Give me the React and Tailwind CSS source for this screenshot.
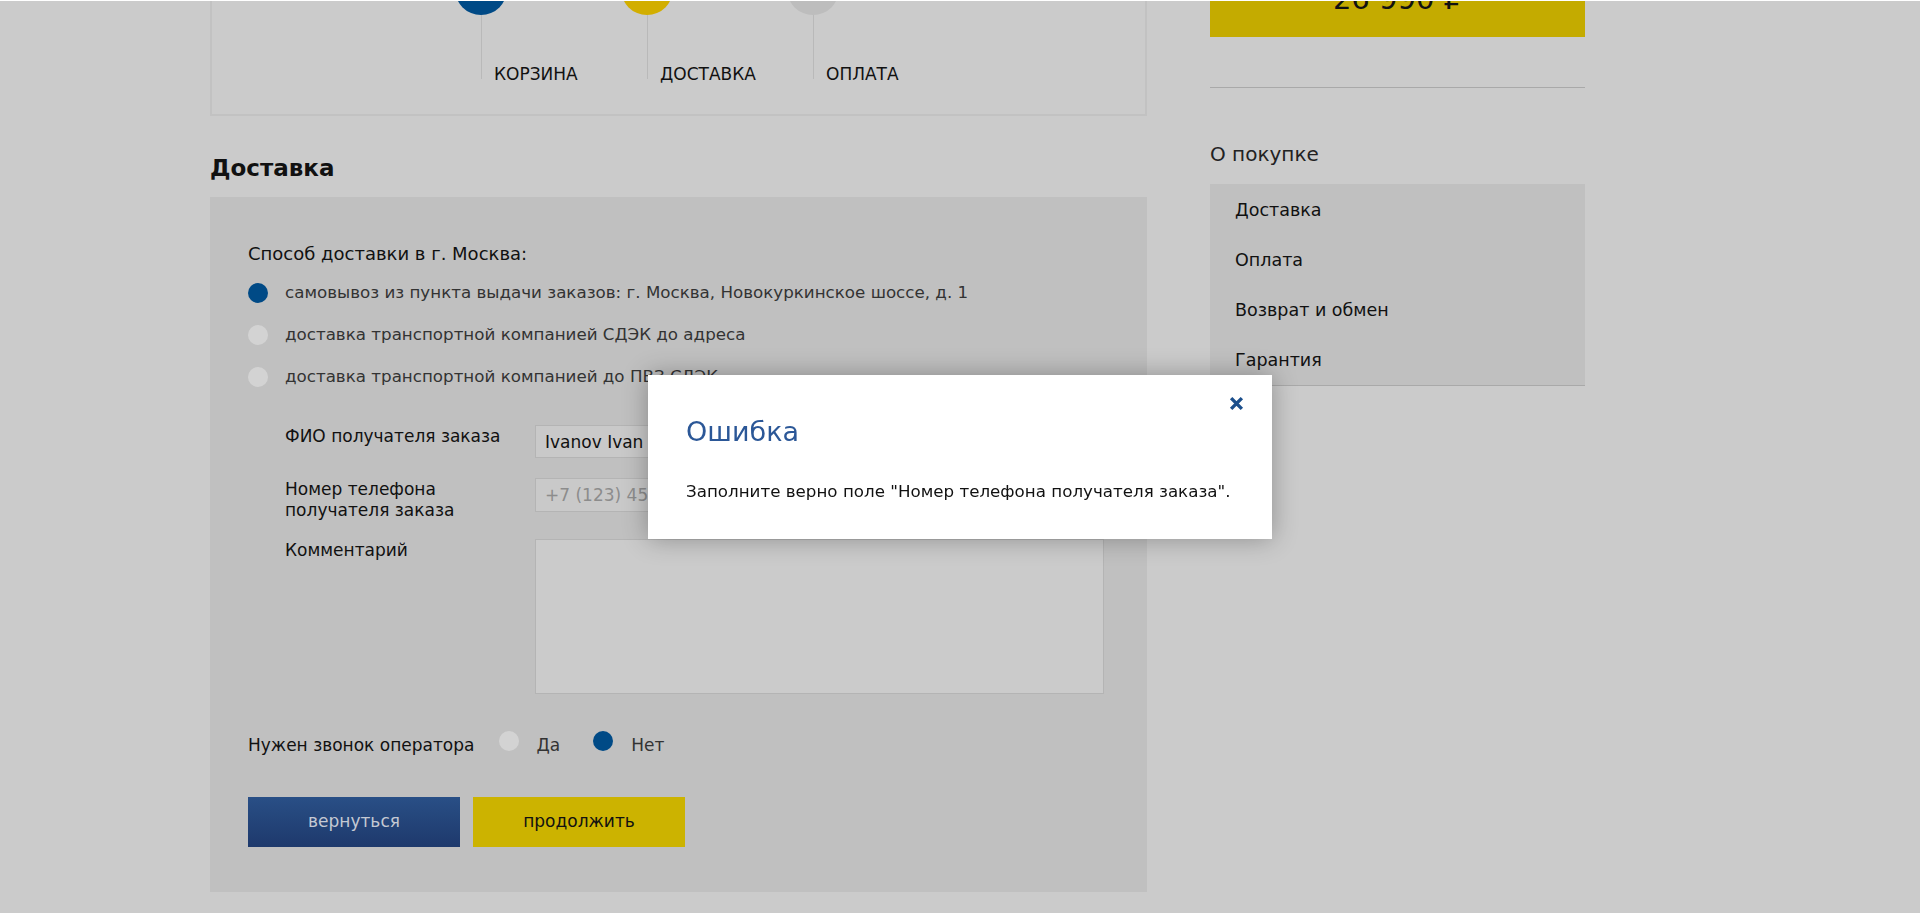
import { useState } from "react";

const steps = [
  { label: "КОРЗИНА", color: "bg-[#004a86]" },
  { label: "ДОСТАВКА", color: "bg-[#d2ae00]" },
  { label: "ОПЛАТА", color: "bg-[#bdbdbd]" },
];

const deliveryOptions = [
  "самовывоз из пункта выдачи заказов: г. Москва, Новокуркинское шоссе, д. 1",
  "доставка транспортной компанией СДЭК до адреса",
  "доставка транспортной компанией до ПВЗ СДЭК",
];

const aboutLinks = ["Доставка", "Оплата", "Возврат и обмен", "Гарантия"];

function Radio({ checked }) {
  return (
    <span
      className={`w-5 h-5 rounded-full shrink-0 ${
        checked ? "bg-[#004a86]" : "bg-[#d3d3d3]"
      }`}
    />
  );
}

function App() {
  const [delivery, setDelivery] = useState(0);
  const [needCall, setNeedCall] = useState(false);
  const [modalOpen, setModalOpen] = useState(true);

  return (
    <div className="min-h-screen bg-[#cbcbcb] overflow-hidden font-['DejaVu_Sans',sans-serif] text-[#111]">
      <div className="flex items-start gap-[63px] pl-[210px]">
        {/* left column */}
        <main className="w-[937px]">
          {/* steps */}
          <div className="-mt-[50px] h-[166px] border-2 border-[#c2c2c2] pt-[11px] pl-[269px] flex">
            {steps.map((step) => (
              <div key={step.label} className="w-[166px]">
                <div className={`w-[52px] h-[52px] rounded-full -ml-[26px] ${step.color}`} />
                <div className="flex items-end">
                  <div className="w-px h-[64px] bg-[#b9b9b9]" />
                  <span className="ml-[12px] -mb-[4px] text-[17px] leading-none">
                    {step.label}
                  </span>
                </div>
              </div>
            ))}
          </div>

          <h2 className="mt-[41px] text-[23px] font-bold leading-none">Доставка</h2>

          {/* delivery panel */}
          <div className="mt-[17px] bg-[#c0c0c0] pl-[38px] pr-[43px] pt-[48px] pb-[45px]">
            <p className="text-[18px] leading-none">Способ доставки в г. Москва:</p>

            <div className="mt-[9px]">
              {deliveryOptions.map((opt, i) => (
                <label
                  key={opt}
                  onClick={() => setDelivery(i)}
                  className="h-[42px] flex items-center gap-[17px] cursor-pointer"
                >
                  <Radio checked={delivery === i} />
                  <span className="text-[16.7px] text-[#333]">{opt}</span>
                </label>
              ))}
            </div>

            {/* form */}
            <div className="mt-[27px] ml-[37px] flex flex-col gap-[20px]">
              <div className="flex items-start">
                <span className="w-[250px] pt-[1px] text-[17px] leading-[21px]">
                  ФИО получателя заказа
                </span>
                <input
                  defaultValue="Ivanov Ivan Ivanovich"
                  className="w-[569px] h-[33px] border border-[#b4b4b4] bg-[#c9c9c9] px-[9px] text-[17px] text-[#111] outline-none"
                />
              </div>
              <div className="flex items-start">
                <span className="w-[250px] pt-[1px] text-[17px] leading-[21px]">
                  Номер телефона
                  <br />
                  получателя заказа
                </span>
                <input
                  placeholder="+7 (123) 456-78-90"
                  className="w-[569px] h-[34px] border border-[#b4b4b4] bg-[#c9c9c9] px-[9px] text-[17px] text-[#111] placeholder:text-[#8c8c8c] outline-none"
                />
              </div>
              <div className="-mt-[2px] flex items-start">
                <span className="w-[250px] pt-[1px] text-[17px] leading-[21px]">Комментарий</span>
                <textarea className="w-[569px] h-[155px] border border-[#b4b4b4] bg-[#cbcbcb] resize-none outline-none" />
              </div>
            </div>

            {/* operator call */}
            <div className="mt-[37px] flex items-center text-[17px] leading-[21px]">
              <span>Нужен звонок оператора</span>
              <button onClick={() => setNeedCall(true)} className="ml-[25px] flex items-center gap-[17px]">
                <span className="mb-[9px] flex">
                  <Radio checked={needCall} />
                </span>
                <span className="text-[#333]">Да</span>
              </button>
              <button onClick={() => setNeedCall(false)} className="ml-[33px] flex items-center gap-[18px]">
                <span className="mb-[9px] flex">
                  <Radio checked={!needCall} />
                </span>
                <span className="text-[#333]">Нет</span>
              </button>
            </div>

            {/* buttons */}
            <div className="mt-[37px] flex gap-[13px]">
              <button className="w-[212px] h-[50px] bg-linear-to-b from-[#294f86] to-[#1e396c] text-[#c4c9d3] text-[17px]">
                вернуться
              </button>
              <button
                onClick={() => setModalOpen(true)}
                className="w-[212px] h-[50px] bg-[#ccb300] text-[#111] text-[17px]"
              >
                продолжить
              </button>
            </div>
          </div>
        </main>

        {/* right column */}
        <aside className="w-[375px]">
          <div className="-mt-[44px] h-[81px] pt-[6px] bg-[#c4ab00] flex items-center justify-center text-[29px]">
            26 990 ₽
          </div>
          <div className="mt-[50px] h-px bg-[#a9a9a9]" />
          <h3 className="mt-[56px] text-[20px] leading-none text-[#222]">О покупке</h3>
          <ul className="mt-[20px] bg-[#c0c0c0] border-b border-[#a9a9a9] pt-[1px]">
            {aboutLinks.map((item) => (
              <li key={item} className="pl-[25px] text-[17.5px] leading-[50px]">
                {item}
              </li>
            ))}
          </ul>
        </aside>
      </div>

      {/* top edge */}
      <div className="fixed top-0 inset-x-0 h-px bg-white" />

      {/* error modal */}
      {modalOpen && (
        <div className="fixed left-[648px] top-[375px] w-[624px] h-[164px] bg-white shadow-[0_0_24px_rgba(0,0,0,0.3)] px-[38px] pt-[43px]">
          <button
            onClick={() => setModalOpen(false)}
            className="absolute top-[21px] right-[28px] w-[15px] h-[15px] text-[#1b4f8c]"
          >
            <svg viewBox="0 0 14 14" width="15" height="15">
              <path d="M2 2 L12 12 M12 2 L2 12" stroke="currentColor" strokeWidth="3.2" />
            </svg>
          </button>
          <h3 className="text-[27px] leading-none text-[#2b5797]">Ошибка</h3>
          <p className="mt-[38px] whitespace-nowrap text-[16.7px] leading-none">
            Заполните верно поле "Номер телефона получателя заказа".
          </p>
        </div>
      )}
    </div>
  );
}

export default App;
